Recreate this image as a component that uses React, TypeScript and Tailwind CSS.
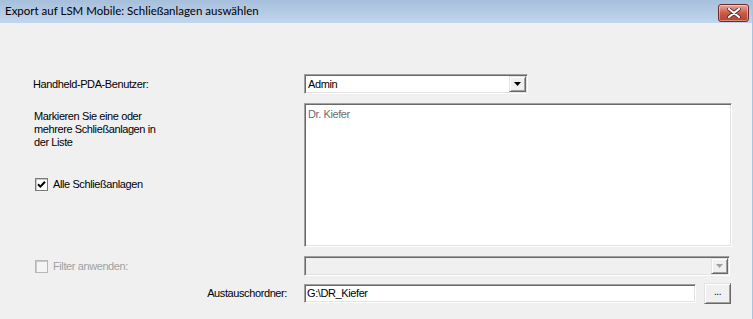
import React from "react";

const sunken =
  "border border-t-[#a0a0a0] border-l-[#a0a0a0] border-b-white border-r-white shadow-[inset_1px_1px_0_#696969,inset_-1px_-1px_0_#e3e3e3]";

function DropArrow({ disabled }: { disabled?: boolean }) {
  return (
    <div className="w-[17px] h-full bg-[#f0f0f0] border border-t-[#e3e3e3] border-l-[#e3e3e3] border-b-[#696969] border-r-[#696969] shadow-[inset_1px_1px_0_#fff,inset_-1px_-1px_0_#a0a0a0] flex items-center justify-center">
      <svg width="7" height="4" viewBox="0 0 7 4">
        <path d="M0 0h7L3.5 4z" fill={disabled ? "#a0a0a0" : "#000"} />
      </svg>
    </div>
  );
}

function CheckBox({ checked, disabled }: { checked?: boolean; disabled?: boolean }) {
  return (
    <div
      className={`w-[13px] h-[13px] border ${
        disabled ? "border-[#b8b8b8] bg-[#f4f4f4]" : "border-[#7a7a7a] bg-white"
      } shadow-[inset_1px_1px_0_#c8c8c8] flex items-center justify-center`}
    >
      {checked && (
        <svg width="9" height="9" viewBox="0 0 9 9">
          <path d="M1 4.2l2.4 2.4L8 1.8" stroke="#000" strokeWidth="2" fill="none" />
        </svg>
      )}
    </div>
  );
}

export default function App() {
  return (
    <div
      className="w-[753px] h-[319px] bg-[#f0f0f0] border-r border-[#a9c4e2] overflow-hidden text-[11px] tracking-[-0.4px] text-black"
      style={{ fontFamily: '"Liberation Sans", Arial, sans-serif' }}
    >
      <div className="h-[23px] flex items-center justify-between pl-[5px] pr-[3px] bg-gradient-to-b from-[#a6bfda] to-[#c1d6ee]">
        <span
          className="text-[11.5px] tracking-normal text-black leading-none mt-[-1px]"
          style={{ fontFamily: 'Lato, "Liberation Sans", sans-serif' }}
        >
          Export auf LSM Mobile: Schließanlagen auswählen
        </span>
        <div className="w-[31px] h-[18px] mt-[2px] rounded-[3px] border border-[#6b2a2f] bg-gradient-to-b from-[#e9a99a] via-[#cc5a45] to-[#b8412f] flex items-center justify-center shadow-[inset_0_0_0_1px_rgba(255,255,255,0.4)]">
          <svg width="14" height="10" viewBox="0 0 14 10">
            <path d="M2 1l10 8M12 1L2 9" stroke="#45292a" strokeWidth="3.6" strokeLinecap="round" />
            <path d="M2 1l10 8M12 1L2 9" stroke="#fff" strokeWidth="2.2" strokeLinecap="round" />
          </svg>
        </div>
      </div>

      <div className="pt-[51px] flex flex-col">
        {/* Row 1 */}
        <div className="flex items-center h-[20px]">
          <div className="w-[304px] pl-[33px]">Handheld-PDA-Benutzer:</div>
          <div className={`w-[224px] h-[20px] bg-white flex items-stretch ${sunken} p-[1px]`}>
            <div className="flex-1 flex items-center pl-[2px]">Admin</div>
            <DropArrow />
          </div>
        </div>

        {/* Row 2 */}
        <div className="flex mt-[9px]">
          <div className="w-[304px] pl-[34px] pt-[7px]">
            <div className="leading-[13px]">
              Markieren Sie eine oder
              <br />
              mehrere Schließanlagen in
              <br />
              der Liste
            </div>
            <div className="flex items-center gap-[5px] mt-[27px] pl-[1px]">
              <CheckBox checked />
              <span>Alle Schließanlagen</span>
            </div>
          </div>
          <div className={`w-[428px] h-[144px] bg-white ${sunken} pl-[3px] pt-[2px] text-[#6d6d6d]`}>
            Dr. Kiefer
          </div>
        </div>

        {/* Row 3 */}
        <div className="flex items-center mt-[9px] h-[20px]">
          <div className="w-[304px] pl-[35px] flex items-center gap-[5px] text-[#a0a0a0]">
            <CheckBox disabled />
            <span>Filter anwenden:</span>
          </div>
          <div className={`w-[426px] h-[20px] bg-[#f0f0f0] flex items-stretch justify-end ${sunken} p-[1px]`}>
            <DropArrow disabled />
          </div>
        </div>

        {/* Row 4 */}
        <div className="flex items-center mt-[7px] h-[21px]">
          <div className="w-[304px] pr-[17px] text-right">Austauschordner:</div>
          <div className={`w-[392px] h-[19px] bg-white flex items-center pl-[2px] ${sunken}`}>
            G:\DR_Kiefer
          </div>
          <div className="ml-[8px] w-[27px] h-[21px] bg-[#f0f0f0] border border-t-[#e3e3e3] border-l-[#e3e3e3] border-b-[#696969] border-r-[#696969] shadow-[inset_1px_1px_0_#fff,inset_-1px_-1px_0_#a0a0a0] flex items-center justify-center text-[10px] leading-none pb-[3px]">
            ...
          </div>
        </div>
      </div>
    </div>
  );
}
